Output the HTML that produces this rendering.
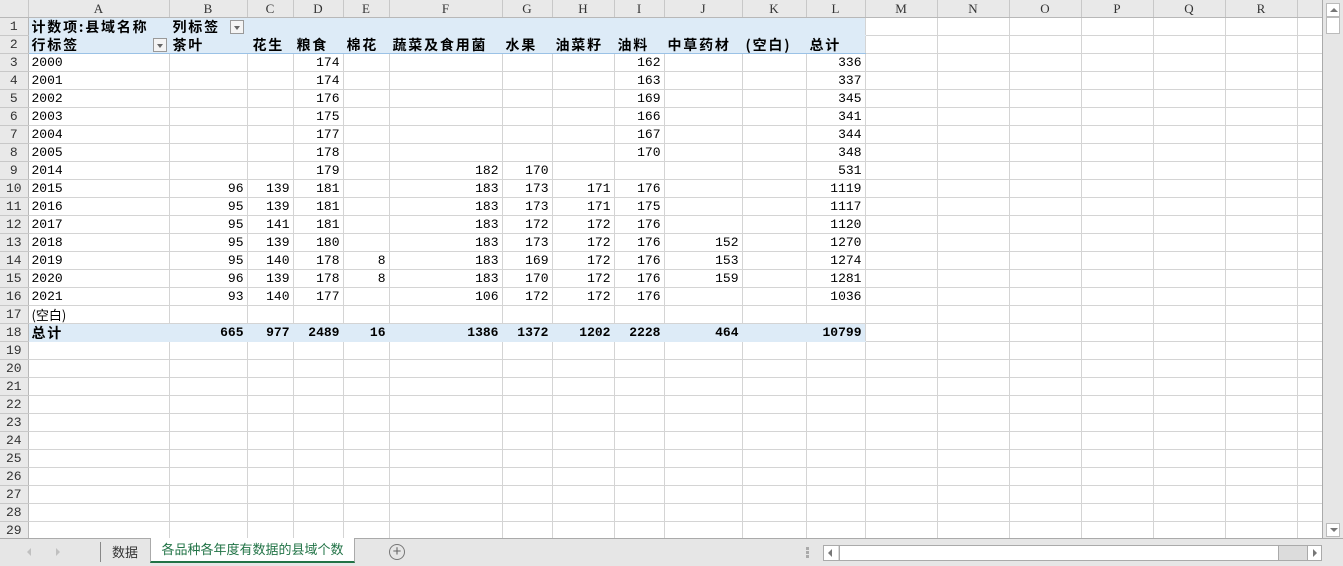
<!DOCTYPE html>
<html><head><meta charset="utf-8"><style>
body{margin:0;width:1343px;height:566px;overflow:hidden;background:#fff;position:relative;font-family:"Liberation Mono","Noto Sans CJK SC",monospace;}
table{border-collapse:collapse;table-layout:fixed;position:absolute;left:0;top:0;}
td,th{padding:1px 3px 0 3px;height:17px;line-height:16px;border-right:1px solid #d4d4d4;border-bottom:1px solid #d4d4d4;font-size:13px;white-space:nowrap;overflow:hidden;box-sizing:border-box;color:#000;}
thead th{background:#e9e9e9;color:#333;font-weight:normal;text-align:center;border-right:1px solid #c8c8c8;border-bottom:1px solid #b8b8b8;height:17px;font-family:"Liberation Serif","Noto Serif CJK SC",serif;font-size:13px;}
tbody th{background:#e9e9e9;color:#333;font-weight:normal;text-align:center;border-right:1px solid #b8b8b8;border-bottom:1px solid #c8c8c8;padding:1px 0 0 0;}
td{text-align:left;}
.r{text-align:right;}
.h{background:#ddebf7;border-right-color:#ddebf7;border-bottom-color:#ddebf7;}
.hb{background:#ddebf7;border-right-color:#ddebf7;border-bottom:1px solid #9bc2e6;}
.b{font-weight:bold;}
.c{font-family:"Noto Sans CJK SC",sans-serif;font-weight:bold;font-size:14px;letter-spacing:1.8px;}
.t{border-top:1px solid #9bc2e6;}
.dd{position:absolute;width:14px;height:14px;border:1px solid #999;background:#f4f4f4;box-sizing:border-box;}
.dd:after{content:"";position:absolute;left:3px;top:5px;border-left:3px solid transparent;border-right:3px solid transparent;border-top:4px solid #666;}
</style></head><body>
<table>
<colgroup><col style="width:28px"><col style="width:141px"><col style="width:78px"><col style="width:46px"><col style="width:50px"><col style="width:46px"><col style="width:113px"><col style="width:50px"><col style="width:62px"><col style="width:50px"><col style="width:78px"><col style="width:64px"><col style="width:59px"><col style="width:72px"><col style="width:72px"><col style="width:72px"><col style="width:72px"><col style="width:72px"><col style="width:72px"><col style="width:25px"></colgroup>
<thead><tr><th style="background:#e9e9e9"></th><th>A</th><th>B</th><th>C</th><th>D</th><th>E</th><th>F</th><th>G</th><th>H</th><th>I</th><th>J</th><th>K</th><th>L</th><th>M</th><th>N</th><th>O</th><th>P</th><th>Q</th><th>R</th><th></th></tr></thead>
<tbody>
<tr><th>1</th><td class="h c">计数项:县域名称</td><td class="h c">列标签</td><td class="h"></td><td class="h"></td><td class="h"></td><td class="h"></td><td class="h"></td><td class="h"></td><td class="h"></td><td class="h"></td><td class="h"></td><td class="h" style="border-right-color:#d4d4d4"></td><td></td><td></td><td></td><td></td><td></td><td></td><td></td></tr>
<tr><th>2</th><td class="hb c">行标签</td><td class="hb c">茶叶</td><td class="hb c" style="padding-left:5px">花生</td><td class="hb c">粮食</td><td class="hb c">棉花</td><td class="hb c">蔬菜及食用菌</td><td class="hb c">水果</td><td class="hb c">油菜籽</td><td class="hb c">油料</td><td class="hb c">中草药材</td><td class="hb c">(空白)</td><td class="hb c" style="border-right-color:#d4d4d4">总计</td><td></td><td></td><td></td><td></td><td></td><td></td><td></td></tr>
<tr><th>3</th><td>2000</td><td></td><td></td><td class="r">174</td><td></td><td></td><td></td><td></td><td class="r">162</td><td></td><td></td><td class="r">336</td><td></td><td></td><td></td><td></td><td></td><td></td><td></td></tr>
<tr><th>4</th><td>2001</td><td></td><td></td><td class="r">174</td><td></td><td></td><td></td><td></td><td class="r">163</td><td></td><td></td><td class="r">337</td><td></td><td></td><td></td><td></td><td></td><td></td><td></td></tr>
<tr><th>5</th><td>2002</td><td></td><td></td><td class="r">176</td><td></td><td></td><td></td><td></td><td class="r">169</td><td></td><td></td><td class="r">345</td><td></td><td></td><td></td><td></td><td></td><td></td><td></td></tr>
<tr><th>6</th><td>2003</td><td></td><td></td><td class="r">175</td><td></td><td></td><td></td><td></td><td class="r">166</td><td></td><td></td><td class="r">341</td><td></td><td></td><td></td><td></td><td></td><td></td><td></td></tr>
<tr><th>7</th><td>2004</td><td></td><td></td><td class="r">177</td><td></td><td></td><td></td><td></td><td class="r">167</td><td></td><td></td><td class="r">344</td><td></td><td></td><td></td><td></td><td></td><td></td><td></td></tr>
<tr><th>8</th><td>2005</td><td></td><td></td><td class="r">178</td><td></td><td></td><td></td><td></td><td class="r">170</td><td></td><td></td><td class="r">348</td><td></td><td></td><td></td><td></td><td></td><td></td><td></td></tr>
<tr><th>9</th><td>2014</td><td></td><td></td><td class="r">179</td><td></td><td class="r">182</td><td class="r">170</td><td></td><td></td><td></td><td></td><td class="r">531</td><td></td><td></td><td></td><td></td><td></td><td></td><td></td></tr>
<tr><th>10</th><td>2015</td><td class="r">96</td><td class="r">139</td><td class="r">181</td><td></td><td class="r">183</td><td class="r">173</td><td class="r">171</td><td class="r">176</td><td></td><td></td><td class="r">1119</td><td></td><td></td><td></td><td></td><td></td><td></td><td></td></tr>
<tr><th>11</th><td>2016</td><td class="r">95</td><td class="r">139</td><td class="r">181</td><td></td><td class="r">183</td><td class="r">173</td><td class="r">171</td><td class="r">175</td><td></td><td></td><td class="r">1117</td><td></td><td></td><td></td><td></td><td></td><td></td><td></td></tr>
<tr><th>12</th><td>2017</td><td class="r">95</td><td class="r">141</td><td class="r">181</td><td></td><td class="r">183</td><td class="r">172</td><td class="r">172</td><td class="r">176</td><td></td><td></td><td class="r">1120</td><td></td><td></td><td></td><td></td><td></td><td></td><td></td></tr>
<tr><th>13</th><td>2018</td><td class="r">95</td><td class="r">139</td><td class="r">180</td><td></td><td class="r">183</td><td class="r">173</td><td class="r">172</td><td class="r">176</td><td class="r">152</td><td></td><td class="r">1270</td><td></td><td></td><td></td><td></td><td></td><td></td><td></td></tr>
<tr><th>14</th><td>2019</td><td class="r">95</td><td class="r">140</td><td class="r">178</td><td class="r">8</td><td class="r">183</td><td class="r">169</td><td class="r">172</td><td class="r">176</td><td class="r">153</td><td></td><td class="r">1274</td><td></td><td></td><td></td><td></td><td></td><td></td><td></td></tr>
<tr><th>15</th><td>2020</td><td class="r">96</td><td class="r">139</td><td class="r">178</td><td class="r">8</td><td class="r">183</td><td class="r">170</td><td class="r">172</td><td class="r">176</td><td class="r">159</td><td></td><td class="r">1281</td><td></td><td></td><td></td><td></td><td></td><td></td><td></td></tr>
<tr><th>16</th><td>2021</td><td class="r">93</td><td class="r">140</td><td class="r">177</td><td></td><td class="r">106</td><td class="r">172</td><td class="r">172</td><td class="r">176</td><td></td><td></td><td class="r">1036</td><td></td><td></td><td></td><td></td><td></td><td></td><td></td></tr>
<tr><th>17</th><td style="font-family:'Noto Sans CJK SC',sans-serif">(空白)</td><td></td><td></td><td></td><td></td><td></td><td></td><td></td><td></td><td></td><td></td><td></td><td></td><td></td><td></td><td></td><td></td><td></td><td></td></tr>
<tr><th>18</th><td class="h t c">总计</td><td class="h t r b">665</td><td class="h t r b">977</td><td class="h t r b">2489</td><td class="h t r b">16</td><td class="h t r b">1386</td><td class="h t r b">1372</td><td class="h t r b">1202</td><td class="h t r b">2228</td><td class="h t r b">464</td><td class="h t"></td><td class="h t r b" style="border-right-color:#d4d4d4">10799</td><td></td><td></td><td></td><td></td><td></td><td></td><td></td></tr>
<tr><th>19</th><td></td><td></td><td></td><td></td><td></td><td></td><td></td><td></td><td></td><td></td><td></td><td></td><td></td><td></td><td></td><td></td><td></td><td></td><td></td></tr>
<tr><th>20</th><td></td><td></td><td></td><td></td><td></td><td></td><td></td><td></td><td></td><td></td><td></td><td></td><td></td><td></td><td></td><td></td><td></td><td></td><td></td></tr>
<tr><th>21</th><td></td><td></td><td></td><td></td><td></td><td></td><td></td><td></td><td></td><td></td><td></td><td></td><td></td><td></td><td></td><td></td><td></td><td></td><td></td></tr>
<tr><th>22</th><td></td><td></td><td></td><td></td><td></td><td></td><td></td><td></td><td></td><td></td><td></td><td></td><td></td><td></td><td></td><td></td><td></td><td></td><td></td></tr>
<tr><th>23</th><td></td><td></td><td></td><td></td><td></td><td></td><td></td><td></td><td></td><td></td><td></td><td></td><td></td><td></td><td></td><td></td><td></td><td></td><td></td></tr>
<tr><th>24</th><td></td><td></td><td></td><td></td><td></td><td></td><td></td><td></td><td></td><td></td><td></td><td></td><td></td><td></td><td></td><td></td><td></td><td></td><td></td></tr>
<tr><th>25</th><td></td><td></td><td></td><td></td><td></td><td></td><td></td><td></td><td></td><td></td><td></td><td></td><td></td><td></td><td></td><td></td><td></td><td></td><td></td></tr>
<tr><th>26</th><td></td><td></td><td></td><td></td><td></td><td></td><td></td><td></td><td></td><td></td><td></td><td></td><td></td><td></td><td></td><td></td><td></td><td></td><td></td></tr>
<tr><th>27</th><td></td><td></td><td></td><td></td><td></td><td></td><td></td><td></td><td></td><td></td><td></td><td></td><td></td><td></td><td></td><td></td><td></td><td></td><td></td></tr>
<tr><th>28</th><td></td><td></td><td></td><td></td><td></td><td></td><td></td><td></td><td></td><td></td><td></td><td></td><td></td><td></td><td></td><td></td><td></td><td></td><td></td></tr>
<tr><th>29</th><td></td><td></td><td></td><td></td><td></td><td></td><td></td><td></td><td></td><td></td><td></td><td></td><td></td><td></td><td></td><td></td><td></td><td></td><td></td></tr>
</tbody></table>
<div class="dd" style="left:230px;top:20px"></div>
<div class="dd" style="left:153px;top:38px"></div>
<div style="position:absolute;left:1322px;top:0;width:21px;height:538px;background:#e6e6e6;border-left:1px solid #aaa;box-sizing:border-box"></div>
<div style="position:absolute;left:1326px;top:3px;width:14px;height:14px;background:#fff;border:1px solid #bbb;box-sizing:border-box"><div style="position:absolute;left:3px;top:4px;border-left:4px solid transparent;border-right:4px solid transparent;border-bottom:4px solid #777"></div></div>
<div style="position:absolute;left:1326px;top:17px;width:14px;height:17px;background:#fff;border:1px solid #bbb;box-sizing:border-box"></div>
<div style="position:absolute;left:1326px;top:523px;width:14px;height:14px;background:#fff;border:1px solid #bbb;box-sizing:border-box"><div style="position:absolute;left:3px;top:4px;border-left:4px solid transparent;border-right:4px solid transparent;border-top:4px solid #777"></div></div>
<div style="position:absolute;left:0;top:538px;width:1343px;height:28px;background:#e6e6e6;border-top:1px solid #aaa;box-sizing:border-box;font-family:'Noto Sans CJK SC',sans-serif;font-size:13px">
<div style="position:absolute;left:27px;top:9px;border-top:4px solid transparent;border-bottom:4px solid transparent;border-right:4px solid #c0c0c0"></div>
<div style="position:absolute;left:56px;top:9px;border-top:4px solid transparent;border-bottom:4px solid transparent;border-left:4px solid #c0c0c0"></div>
<div style="position:absolute;left:100px;top:3px;width:1px;height:20px;background:#888"></div>
<div style="position:absolute;left:112px;top:3px;line-height:20px;color:#333">数据</div>
<div style="position:absolute;left:150px;top:-1px;width:205px;height:25px;background:#fff;border-bottom:2px solid #217346;border-left:1px solid #aaa;border-right:1px solid #aaa;box-sizing:border-box;color:#217346;line-height:22px;text-align:center">各品种各年度有数据的县域个数</div>
<div style="position:absolute;left:389px;top:5px;width:16px;height:16px;border:1px solid #777;border-radius:50%;box-sizing:border-box;color:#666;font-size:15px;line-height:13px;text-align:center;font-family:'Liberation Sans',sans-serif">+</div>
<div style="position:absolute;left:806px;top:8px;width:3px;height:3px;background:#aaa;box-shadow:0 4px 0 #aaa,0 8px 0 #aaa"></div>
<div style="position:absolute;left:823px;top:6px;width:499px;height:16px;background:#dcdcdc;border:1px solid #aaa;box-sizing:border-box"></div>
<div style="position:absolute;left:824px;top:7px;width:14px;height:14px;background:#fff"><div style="position:absolute;left:4px;top:3px;border-top:4px solid transparent;border-bottom:4px solid transparent;border-right:4px solid #777"></div></div>
<div style="position:absolute;left:839px;top:7px;width:440px;height:14px;background:#fff;border-left:1px solid #aaa;border-right:1px solid #aaa;box-sizing:border-box"></div>
<div style="position:absolute;left:1307px;top:7px;width:14px;height:14px;background:#fff;border-left:1px solid #aaa;box-sizing:border-box"><div style="position:absolute;left:5px;top:3px;border-top:4px solid transparent;border-bottom:4px solid transparent;border-left:4px solid #777"></div></div>
</div>
</body></html>
